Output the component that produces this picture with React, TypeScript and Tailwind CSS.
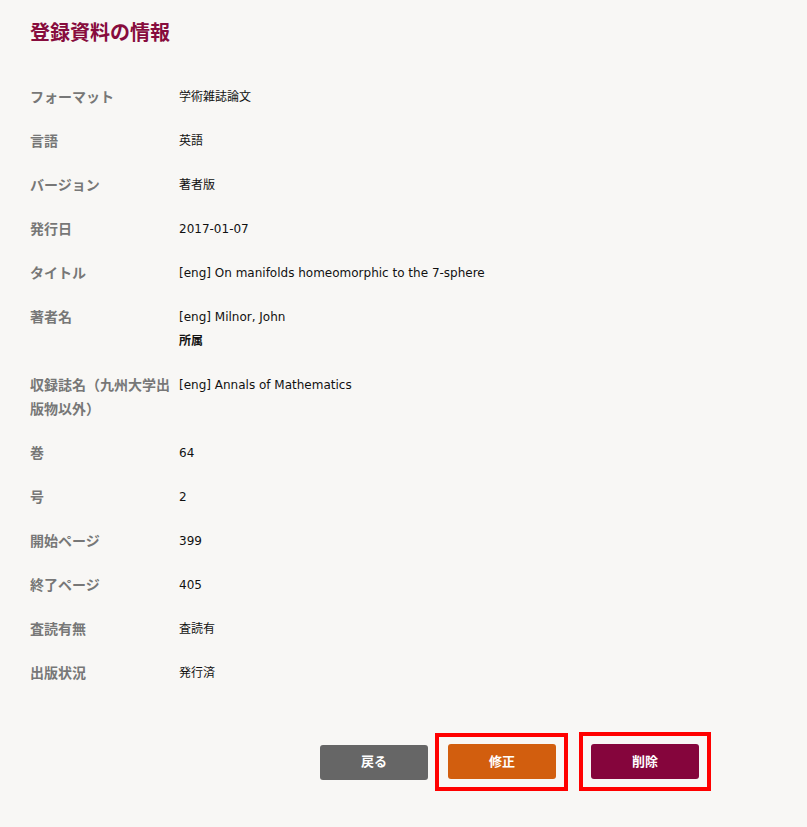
import React from "react";

type Row = { label: string; values: React.ReactNode[] };

const rows: Row[] = [
  { label: "フォーマット", values: ["学術雑誌論文"] },
  { label: "言語", values: ["英語"] },
  { label: "バージョン", values: ["著者版"] },
  { label: "発行日", values: ["2017-01-07"] },
  { label: "タイトル", values: ["[eng] On manifolds homeomorphic to the 7-sphere"] },
  {
    label: "著者名",
    values: ["[eng] Milnor, John", <span className="font-bold">所属</span>],
  },
  { label: "収録誌名（九州大学出版物以外）", values: ["[eng] Annals of Mathematics"] },
  { label: "巻", values: ["64"] },
  { label: "号", values: ["2"] },
  { label: "開始ページ", values: ["399"] },
  { label: "終了ページ", values: ["405"] },
  { label: "査読有無", values: ["査読有"] },
  { label: "出版状況", values: ["発行済"] },
];

function App() {
  return (
    <div
      className="min-h-[827px] w-full bg-[#f8f7f5] pl-[30px] pt-[19px]"
      style={{ fontFamily: '"DejaVu Sans", "Noto Sans CJK JP", sans-serif' }}
    >
      <h1 className="text-[20px] leading-[28px] font-bold text-[#870c3d]">
        登録資料の情報
      </h1>

      <div className="mt-[28px]">
        {rows.map((r, i) => (
          <div key={i} className="flex py-[10px]">
            <div className="w-[149px] shrink-0 text-[14px] leading-[24px] font-bold text-[#777]">
              {r.label}
            </div>
            <div className="text-[12px] leading-[24px] text-[#111]">
              {r.values.map((v, j) => (
                <div key={j}>{v}</div>
              ))}
            </div>
          </div>
        ))}
      </div>

      <div className="mt-[38px] flex items-center pl-[290px] text-[13px] font-bold text-white">
        <button className="h-[35px] w-[108px] rounded-[3px] bg-[#666666]">戻る</button>
        <div className="ml-[7px] border-4 border-[#ff0000] pt-[7px] pb-[8px] pl-[9px] pr-[8px]">
          <button className="h-[35px] w-[108px] rounded-[3px] bg-[#d25e0e]">修正</button>
        </div>
        <div className="ml-[11px] -mt-[1px] border-4 border-[#ff0000] pt-[8px] pb-[8px] pl-[8px] pr-[8px]">
          <button className="h-[35px] w-[108px] rounded-[3px] bg-[#85053c]">削除</button>
        </div>
      </div>
    </div>
  );
}

export default App;
